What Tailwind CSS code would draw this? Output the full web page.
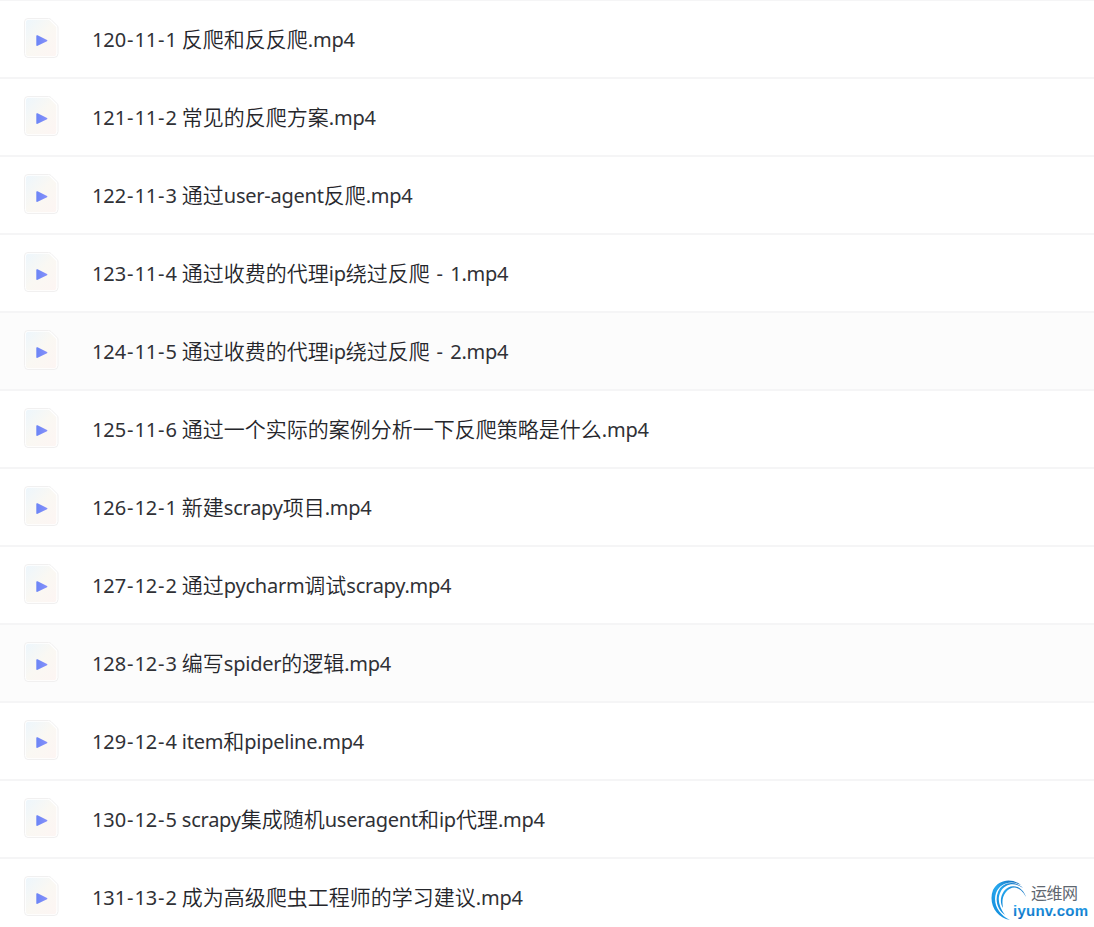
<!DOCTYPE html>
<html lang="zh-CN">
  <head>
    <meta charset="UTF-8" />
    <meta name="viewport" content="width=device-width, initial-scale=1.0" />
    <title>Files</title>
    <script src="https://cdn.jsdelivr.net/npm/@tailwindcss/browser@4"></script>
  </head>
  <body class="bg-white overflow-hidden">
    <main class="relative h-[927px] overflow-hidden border-t border-[#f5f5f6]">
      <ul id="files"></ul>

      <!-- site logo -->
      <div class="absolute left-[988px] top-[874px] w-[106px] h-[52px]">
        <svg class="w-full h-full" viewBox="0 0 106 52">
          <defs>
            <linearGradient id="swoosh" x1="1" y1="0" x2="0" y2="1">
              <stop offset="0" stop-color="#1265b5" />
              <stop offset="0.5" stop-color="#27a8ee" />
              <stop offset="1" stop-color="#0d86d8" />
            </linearGradient>
            <linearGradient id="brand" x1="0" y1="0" x2="0" y2="1">
              <stop offset="0.2" stop-color="#27a5ec" />
              <stop offset="1" stop-color="#0868bd" />
            </linearGradient>
          </defs>
          <g fill="url(#swoosh)">
            <path d="M33 10C23 2 10 5 5 15C0 28 8 43 22 45C11 40 4.500 29 8 18C12 8 23 5 33 10Z" />
            <path d="M35 13C27 5 14 7 10 17C6.500 26 10 35 17 40C11 32 9 24 12.500 17C17 8.500 27 7 35 13Z" />
            <path d="M38 22C34 10 22 8 16 16C12 22 12 28 15 33C14 27 14 22 18 17C24 10 32 11 38 22Z" />
          </g>
          <text x="43" y="24" font-size="16" fill="#606770" class="font-['Noto_Sans_CJK_SC',sans-serif]" textLength="47">运维网</text>
          <text x="25" y="41" font-size="15" font-weight="700" fill="url(#brand)" class="font-['Liberation_Sans',sans-serif]" textLength="75">iyunv.com</text>
        </svg>
      </div>
    </main>

    <!-- gradients shared by the video file icons -->
    <svg class="absolute w-0 h-0">
      <defs>
        <linearGradient id="paper" x1="0" y1="0" x2="1" y2="1">
          <stop offset="0" stop-color="#edf6fc" />
          <stop offset="0.5" stop-color="#faf8f3" />
          <stop offset="1" stop-color="#fdf5f3" />
        </linearGradient>
        <linearGradient id="play" x1="0" y1="0" x2="1" y2="0">
          <stop offset="0" stop-color="#6b85f6" />
          <stop offset="1" stop-color="#8790fa" />
        </linearGradient>
      </defs>
    </svg>

    <script>
      const files = [
        ["120-11-1", "反爬和反反爬"],
        ["121-11-2", "常见的反爬方案"],
        ["122-11-3", "通过user-agent反爬"],
        ["123-11-4", "通过收费的代理ip绕过反爬 - 1"],
        ["124-11-5", "通过收费的代理ip绕过反爬 - 2"],
        ["125-11-6", "通过一个实际的案例分析一下反爬策略是什么"],
        ["126-12-1", "新建scrapy项目"],
        ["127-12-2", "通过pycharm调试scrapy"],
        ["128-12-3", "编写spider的逻辑"],
        ["129-12-4", "item和pipeline"],
        ["130-12-5", "scrapy集成随机useragent和ip代理"],
        ["131-13-2", "成为高级爬虫工程师的学习建议"],
      ];

      const icon = `<svg class="w-9 h-[42px] mb-[2px] shrink-0" viewBox="0 0 36 42">
        <path d="M5 1.500H25.500Q27 1.500 28 2.500L34 8.500Q35 9.500 35 11V36.500Q35 40.500 31 40.500H5Q1.500 40.500 1.500 36.500V5Q1.500 1.500 5 1.500Z" fill="#fff" stroke="#f1f0f0" stroke-width="1" />
        <path d="M5.800 2.800H25Q26 2.800 27 3.700L32.500 9.200Q33.300 10 33.300 11V36Q33.300 39.200 30.500 39.200H5.800Q2.800 39.200 2.800 36V5.800Q2.800 2.800 5.800 2.800Z" fill="url(#paper)" />
        <path d="M13.300 19Q13.300 17.800 14.600 18.300L24 22.900Q25 23.500 24 24.200L14.600 28.800Q13.300 29.300 13.300 28Z" fill="url(#play)" />
      </svg>`;

      const hyphen = '<span class="px-px">-</span>';

      // latin runs are set slightly smaller than the Chinese ones
      const latin = (text) =>
        text.replace(
          /[\x20-\x7e]+/g,
          (run) =>
            `<span class="text-[20px] font-normal text-[#303136] tracking-[-0.25px]">${run.replace(" - ", `<span class="tracking-[0.5px]"> ${hyphen} </span>`)}</span>`
        );

      document.getElementById("files").innerHTML = files
        .map(
          ([number, title], i) => `<li
            class="flex items-center h-[78px] pl-[23px] gap-[33px] border-b-2 border-[#f5f5f6] ${i % 4 === 0 && i > 0 ? "bg-[#fcfcfc]" : ""}"
          >
            ${icon}
            <p class="text-[21px] leading-[30px] font-[350] text-[#25262b] whitespace-pre font-['Noto_Sans','Noto_Sans_CJK_SC',sans-serif]"><span class="text-[20px] font-normal text-[#303136] tracking-[-0.1px]">${number.replaceAll("-", hyphen)} </span>${latin(title + ".mp4")}</p>
          </li>`
        )
        .join("");
    </script>
  </body>
</html>
